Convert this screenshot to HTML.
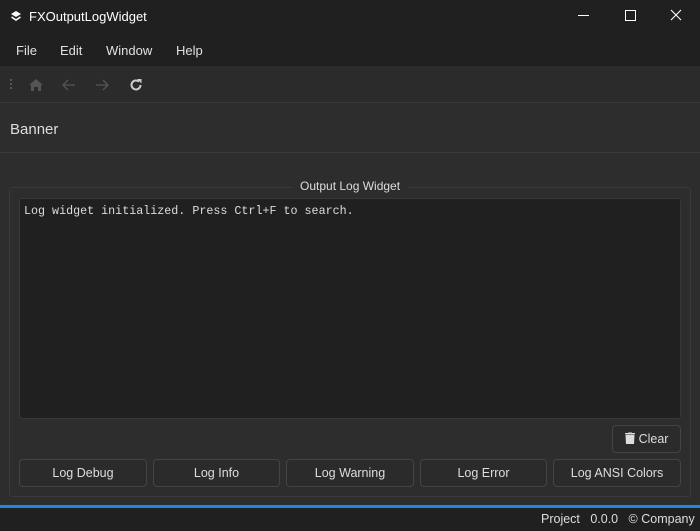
<html><head><style>
body{margin:0;width:700px;height:531px;background:#2d2d2d;font-family:"Liberation Sans",sans-serif;color:#e0e0e0;position:relative;overflow:hidden;font-size:13px}
.a{position:absolute}
.btn{position:absolute;top:459px;height:28px;border:1px solid #444;border-radius:4px;background:#2b2b2b;text-align:center;line-height:27px;font-size:12.5px;color:#ddd;box-sizing:border-box}
</style></head><body>
<div class="a" style="left:0;top:0;width:700px;height:66px;background:#202020"></div>
<svg class="a" style="left:10px;top:10px" width="12" height="12" viewBox="0 0 12 12"><path d="M6 1L11 4L6 7L1 4Z" fill="#fff"/><path d="M1.5 7L6 10L10.5 7" stroke="#fff" stroke-width="1.6" fill="none"/></svg>
<div class="a" style="left:29px;top:9px;font-size:13px;color:#fff">FXOutputLogWidget</div>
<div class="a" style="left:578px;top:15px;width:11px;height:1px;background:#fff"></div>
<div class="a" style="left:625px;top:10px;width:9px;height:9px;border:1px solid #fff"></div>
<svg class="a" style="left:670px;top:9px" width="12" height="12"><path d="M1 1L11 11M11 1L1 11" stroke="#fff" stroke-width="1.1"/></svg>
<div class="a" style="left:16px;top:43px">File</div>
<div class="a" style="left:60px;top:43px">Edit</div>
<div class="a" style="left:106px;top:43px">Window</div>
<div class="a" style="left:176px;top:43px">Help</div>
<div class="a" style="left:0;top:66px;width:700px;height:36px;background:#2b2b2b;border-bottom:1px solid #3a3a3a"></div>
<svg class="a" style="left:8px;top:78px" width="6" height="14"><circle cx="3" cy="2" r="1" fill="#666"/><circle cx="3" cy="6" r="1" fill="#666"/><circle cx="3" cy="10" r="1" fill="#666"/></svg>
<svg class="a" style="left:29px;top:79px" width="14" height="12"><path d="M7 0L14 6H12V12H9V8H5V12H2V6H0Z" fill="#555"/></svg>
<svg class="a" style="left:62px;top:79px" width="14" height="12"><path d="M13 6H2M6 1L1 6L6 11" stroke="#555" stroke-width="1.3" fill="none"/></svg>
<svg class="a" style="left:95px;top:79px" width="14" height="12"><path d="M1 6H12M8 1L13 6L8 11" stroke="#555" stroke-width="1.3" fill="none"/></svg>
<svg class="a" style="left:129px;top:78px" width="14" height="14" viewBox="0 0 14 14"><path d="M11.5 7A4.5 4.5 0 1 1 10 3.6" stroke="#ccc" stroke-width="2" fill="none"/><path d="M8 1H12.5V5.5Z" fill="#ccc"/></svg>
<div class="a" style="left:10px;top:121px;font-size:15px;color:#ddd">Banner</div>
<div class="a" style="left:0;top:152px;width:700px;height:1px;background:#3a3a3a"></div>
<div class="a" style="left:9px;top:187px;width:680px;height:308px;border:1px solid #3a3a3a;border-radius:3px"></div>
<div class="a" style="left:292px;top:179px;padding:0 8px;background:#2d2d2d;font-size:12px;color:#ddd">Output Log Widget</div>
<div class="a" style="left:19px;top:198px;width:662px;height:221px;background:#202020;border:1px solid #383838;border-radius:3px;box-sizing:border-box"></div>
<div class="a" style="left:24px;top:204px;font-family:'Liberation Mono',monospace;font-size:11.7px;color:#ddd">Log widget initialized. Press Ctrl+F to search.</div>
<div class="btn" style="left:612px;top:425px;width:69px"><svg width="10" height="12" style="vertical-align:-1px;margin-right:4px"><path d="M0 1.5H10M3 0H7M1 3H9L8.5 12H1.5Z" fill="#ddd" stroke="#ddd" stroke-width="1"/></svg>Clear</div>
<div class="btn" style="left:19px;width:128px">Log Debug</div>
<div class="btn" style="left:153px;width:127px">Log Info</div>
<div class="btn" style="left:286px;width:128px">Log Warning</div>
<div class="btn" style="left:420px;width:127px">Log Error</div>
<div class="btn" style="left:553px;width:128px">Log ANSI Colors</div>
<div class="a" style="left:0;top:505px;width:700px;height:3px;background:#1e88e5"></div>
<div class="a" style="left:0;top:508px;width:700px;height:23px;background:#202020"></div>
<div class="a" style="left:541px;top:512px;font-size:12.5px;color:#ddd;white-space:pre">Project   0.0.0   © Company</div>
</body></html>
